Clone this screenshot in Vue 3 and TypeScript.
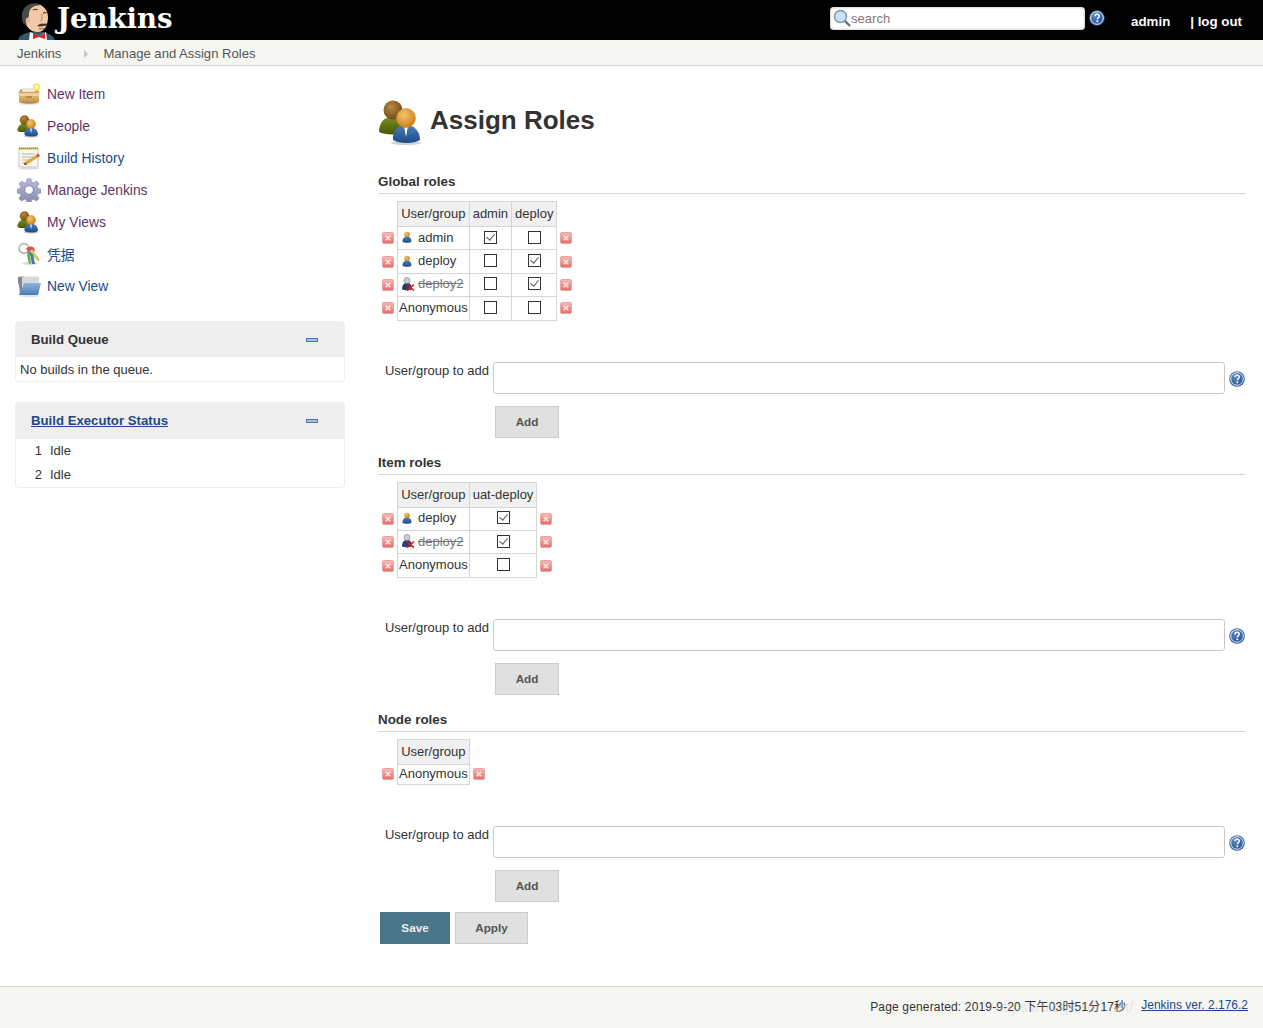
<script setup lang="ts">
interface RoleRow {
  name: string
  kind: 'user' | 'gone' | 'anon'
  checks: boolean[]
}

interface RoleSection {
  title: string
  roles: string[]
  rows: RoleRow[]
}

const tasks = [
  { label: 'New Item', icon: 'i-box', visited: true },
  { label: 'People', icon: 'i-people', visited: true },
  { label: 'Build History', icon: 'i-notes', visited: false },
  { label: 'Manage Jenkins', icon: 'i-gear', visited: true },
  { label: 'My Views', icon: 'i-people', visited: true },
  { label: '凭据', icon: 'i-keys', visited: false },
  { label: 'New View', icon: 'i-folder', visited: false },
]

const sections: RoleSection[] = [
  {
    title: 'Global roles',
    roles: ['admin', 'deploy'],
    rows: [
      { name: 'admin', kind: 'user', checks: [true, false] },
      { name: 'deploy', kind: 'user', checks: [false, true] },
      { name: 'deploy2', kind: 'gone', checks: [false, true] },
      { name: 'Anonymous', kind: 'anon', checks: [false, false] },
    ],
  },
  {
    title: 'Item roles',
    roles: ['uat-deploy'],
    rows: [
      { name: 'deploy', kind: 'user', checks: [true] },
      { name: 'deploy2', kind: 'gone', checks: [true] },
      { name: 'Anonymous', kind: 'anon', checks: [false] },
    ],
  },
  {
    title: 'Node roles',
    roles: [],
    rows: [{ name: 'Anonymous', kind: 'anon', checks: [] }],
  },
]
</script>

<template>
  <svg class="sprites" width="0" height="0" aria-hidden="true">
    <defs>
      <radialGradient id="g-orange" cx="40%" cy="35%" r="70%">
        <stop offset="0" stop-color="#f6c66e" />
        <stop offset="1" stop-color="#c97d16" />
      </radialGradient>
      <radialGradient id="g-brown" cx="40%" cy="35%" r="70%">
        <stop offset="0" stop-color="#b98a45" />
        <stop offset="1" stop-color="#6d4513" />
      </radialGradient>
      <linearGradient id="g-blue" x1="0" y1="0" x2="0" y2="1">
        <stop offset="0" stop-color="#4b80bd" />
        <stop offset="1" stop-color="#1d4a87" />
      </linearGradient>
      <linearGradient id="g-olive" x1="0" y1="0" x2="0" y2="1">
        <stop offset="0" stop-color="#7d8f22" />
        <stop offset="1" stop-color="#465608" />
      </linearGradient>
      <linearGradient id="g-box" x1="0" y1="0" x2="0" y2="1">
        <stop offset="0" stop-color="#ecc58a" />
        <stop offset="1" stop-color="#c08c45" />
      </linearGradient>
      <linearGradient id="g-folder" x1="0" y1="0" x2="0" y2="1">
        <stop offset="0" stop-color="#8fb4de" />
        <stop offset="1" stop-color="#4a7cb8" />
      </linearGradient>
      <linearGradient id="g-red" x1="0" y1="0" x2="0" y2="1">
        <stop offset="0" stop-color="#f5bcb9" />
        <stop offset="1" stop-color="#e46a67" />
      </linearGradient>
      <linearGradient id="g-gear" x1="0" y1="0" x2="0" y2="1">
        <stop offset="0" stop-color="#b9b9d8" />
        <stop offset="1" stop-color="#8a8ab2" />
      </linearGradient>
      <radialGradient id="g-help" cx="40%" cy="35%" r="70%">
        <stop offset="0" stop-color="#5b8ac6" />
        <stop offset="1" stop-color="#1f4a8a" />
      </radialGradient>

      <symbol id="i-people" viewBox="0 0 48 48">
        <ellipse cx="28" cy="45" rx="15" ry="2" fill="#000" opacity=".18" />
        <path d="M1 34c0-10 6-15 12-15 7 0 13 5 13 16-8 2-20 2-25-1z" fill="url(#g-olive)" />
        <circle cx="15" cy="12" r="9.500" fill="url(#g-brown)" />
        <path d="M15 42c-1-9 5-15 13-15s14 6 14 15c-6 4-21 4-27 0z" fill="url(#g-blue)" />
        <path d="M26 28h4l-2 11z" fill="#fff" />
        <circle cx="28" cy="20" r="9.500" fill="url(#g-orange)" stroke="#d08d2a" stroke-width=".6" />
      </symbol>

      <symbol id="i-box" viewBox="0 0 24 24">
        <path d="M1 11l3-4h16l3 4-3 2H4z" fill="#c9985a" />
        <path d="M5 6h13v4H5z" fill="#efe7d6" />
        <path d="M2 11h20v9c-5 2-15 2-20 0z" fill="url(#g-box)" />
        <path d="M1 10l5 1h12l5-1-2 4H3z" fill="#f0cf98" />
        <path d="M9 14h6v2H9z" fill="#8f5f20" opacity=".45" />
        <ellipse cx="12" cy="21.500" rx="10" ry="1.300" fill="#000" opacity=".14" />
        <circle cx="19.500" cy="5" r="3.700" fill="#f8e85a" />
        <circle cx="19.500" cy="5" r="1.800" fill="#fffbe0" />
      </symbol>

      <symbol id="i-notes" viewBox="0 0 24 24">
        <path d="M2 2h19v19H2z" fill="#f7f6ef" stroke="#bcbcb0" stroke-width=".8" />
        <path d="M2 1.500h19v2H2z" fill="#d2b868" />
        <path d="M2 2.500h19" stroke="#8a6c20" stroke-width=".8" stroke-dasharray="1 1" />
        <path d="M5 8h13M5 11h13M5 14h8M5 17h6" stroke="#b4b4ac" stroke-width="1" />
        <path d="M7 19l1-3 11-7 2 2.500-11 7z" fill="#e7a33d" />
        <path d="M19 9l2 2.500 2-1.500-2-2.500z" fill="#d8433a" />
        <path d="M7 19l1-3 2 2.500z" fill="#5a4a30" />
        <ellipse cx="12" cy="22.500" rx="10" ry="1.100" fill="#000" opacity=".14" />
      </symbol>

      <symbol id="i-gear" viewBox="0 0 24 24">
        <path d="M10 .8h4l.6 3.300 2 .8 2.800-1.900 2.700 2.800-1.900 2.800.8 2 3 .6v3.800l-3 .6-.8 2 1.900 2.800-2.700 2.700-2.800-1.900-2 .9-.6 3h-4l-.6-3-2-.9-2.800 1.900-2.700-2.700 1.900-2.800-.8-2-3-.6v-3.800l3-.6.800-2-1.900-2.800 2.700-2.800 2.800 1.900 2-.8z" fill="url(#g-gear)" stroke="#7d7da5" stroke-width=".5" />
        <circle cx="12" cy="12" r="4.300" fill="#fff" stroke="#77779c" stroke-width=".8" />
      </symbol>

      <symbol id="i-keys" viewBox="0 0 24 24">
        <ellipse cx="13" cy="21.500" rx="8" ry="1.500" fill="#000" opacity=".16" />
        <circle cx="7" cy="6.500" r="4.800" fill="none" stroke="#b4b4b4" stroke-width="1.700" />
        <path d="M9 7c2-3 6-3 8-1l1 3-5 2z" fill="#d9534a" />
        <path d="M15 7l8 11-2 1.500L12 10z" fill="#dcc667" />
        <path d="M10 9l4 1 1 3-4 2z" fill="#55a650" />
        <path d="M10 13l3-1 1 9-2 1z" fill="#5fae50" />
        <path d="M13 11l3 1 2 10h-3z" fill="#3f78b5" />
      </symbol>

      <symbol id="i-folder" viewBox="0 0 24 24">
        <path d="M1 3l6-1 1 2h14v6H1z" fill="#9aa0a8" />
        <path d="M5 2.500h17v9H5z" fill="#d8d8d8" />
        <path d="M1 3h4v16L3 20z" fill="#7f8690" />
        <path d="M7 9h17l-3 12H2z" fill="url(#g-folder)" />
        <ellipse cx="12" cy="22" rx="10" ry="1" fill="#000" opacity=".12" />
      </symbol>

      <symbol id="i-user" viewBox="0 0 12 12">
        <path d="M1.500 11c0-4 2-5.500 4.500-5.500s4.500 1.500 4.500 5.500c-2 1-7 1-9 0z" fill="url(#g-blue)" />
        <circle cx="6" cy="3.500" r="2.800" fill="url(#g-orange)" />
      </symbol>

      <symbol id="i-gone" viewBox="0 0 14 14">
        <path d="M1 12.500c0-5 2.300-6.500 5-6.500s5 1.500 5 6.500c-2 1-8 1-10 0z" fill="#27406f" />
        <circle cx="6" cy="3.500" r="3" fill="#d0cfd0" stroke="#77727a" stroke-width=".6" />
        <path d="M6 7.500l7 6M13 7.500l-7 6" stroke="#e0141c" stroke-width="1.600" />
      </symbol>

      <symbol id="i-del" viewBox="0 0 12 12">
        <rect x=".5" y=".5" width="11" height="11" rx="1.500" fill="url(#g-red)" stroke="#e8a5a2" />
        <path d="M3.700 3.700l4.600 4.600M8.300 3.700l-4.600 4.600" stroke="#fbe6e5" stroke-width="1.500" />
      </symbol>

      <symbol id="i-help" viewBox="0 0 16 16">
        <circle cx="8" cy="8" r="7.800" fill="url(#g-help)" />
        <circle cx="8" cy="8" r="6.300" fill="none" stroke="#fff" stroke-width=".9" />
        <path d="M5.900 6.300c0-1.300 1-2 2.200-2s2.100.8 2.100 1.900c0 1.500-1.800 1.600-1.800 3" fill="none" stroke="#fff" stroke-width="1.500" />
        <circle cx="8.300" cy="11.300" r="1" fill="#fff" />
      </symbol>
    </defs>
  </svg>

  <div class="page">
    <header class="topbar">
      <div class="logo">
        <svg class="butler" viewBox="0 0 38 40" width="38" height="40" aria-hidden="true">
          <path d="M0 40c1-5 8-7 12-8h12c6 1 11 3 13 8z" fill="#35576b" />
          <path d="M12 32l9 4 7-4 1 8H11z" fill="#f4f4f0" />
          <path d="M5 17C4 9 9 4 17 4c8 0 13 6 13 13 0 7-3 15-10 15-7 1-13-6-15-15z" fill="#f2c9a8" />
          <path d="M5 23C2 14 5 5 14 3.500c5-.5 8 .5 10 1.500-8 0-13 3-13 9 0 3-1 4-1 5-2-1-3 2-1 6z" fill="#4a4a48" />
          <circle cx="10" cy="20" r="2.300" fill="#e8b48f" />
          <path d="M15 10c1.500-1 3-1 4.500 0M25 13c1-.6 2-.6 3.500 0" stroke="#4b3b30" stroke-width="1.200" fill="none" />
          <path d="M24 14c0 4 1 6-2 7" stroke="#b07d5e" stroke-width="1" fill="none" />
          <path d="M19 26c3-3 6-3 7-2 1-1 3 0 4 1-3 1-8 2-11 1z" fill="#3f3630" />
          <path d="M21 28.500c3 .8 5 .5 7-1" stroke="#8a5443" stroke-width="1" fill="none" />
          <path d="M15 33l6 3 6-3v6l-6-2-6 2z" fill="#cf2a26" />
        </svg>
        <span class="logo-text">Jenkins</span>
      </div>
      <div class="top-right">
        <div class="search">
          <svg class="search-icon" viewBox="0 0 18 18" width="18" height="18" aria-hidden="true">
            <circle cx="7.500" cy="7.500" r="6" fill="#cfe0ef" stroke="#7f97ad" stroke-width="1.500" />
            <path d="M12 12l5 5" stroke="#5f6b75" stroke-width="2.200" />
          </svg>
          <input class="search-input" type="text" placeholder="search" />
        </div>
        <svg class="top-help" width="16" height="16" aria-hidden="true"><use href="#i-help" /></svg>
        <a class="top-link user-link">admin</a>
        <span class="top-link logout">| log out</span>
      </div>
    </header>

    <nav class="crumbs">
      <a class="crumb">Jenkins</a>
      <span class="crumb-arrow"></span>
      <a class="crumb">Manage and Assign Roles</a>
    </nav>

    <div class="body">
      <aside class="side">
        <ul class="tasks">
          <li v-for="task in tasks" :key="task.label" class="task">
            <svg class="task-icon" width="24" height="24" aria-hidden="true"><use :href="`#${task.icon}`" /></svg>
            <a class="task-link" :class="{ visited: task.visited }">{{ task.label }}</a>
          </li>
        </ul>

        <section class="pane queue">
          <div class="pane-head">
            <span class="pane-title">Build Queue</span>
            <span class="collapse"></span>
          </div>
          <div class="queue-empty">No builds in the queue.</div>
        </section>

        <section class="pane executors">
          <div class="pane-head">
            <a class="pane-title pane-link">Build Executor Status</a>
            <span class="collapse"></span>
          </div>
          <div v-for="n in 2" :key="n" class="executor">
            <span class="executor-num">{{ n }}</span>
            <span>Idle</span>
          </div>
        </section>
      </aside>

      <main class="main">
        <div class="title-row">
          <svg width="48" height="48" aria-hidden="true"><use href="#i-people" /></svg>
          <h1 class="title">Assign Roles</h1>
        </div>

        <section v-for="section in sections" :key="section.title" class="role-section">
          <h2 class="section-title">{{ section.title }}</h2>
          <table class="grid">
            <thead>
              <tr>
                <th class="spacer"></th>
                <th class="cell head">User/group</th>
                <th v-for="role in section.roles" :key="role" class="cell head">{{ role }}</th>
                <th class="spacer"></th>
              </tr>
            </thead>
            <tbody>
              <tr v-for="row in section.rows" :key="row.name">
                <td class="del"><svg width="12" height="12" aria-hidden="true"><use href="#i-del" /></svg></td>
                <td class="cell name">
                  <span v-if="row.kind === 'anon'">{{ row.name }}</span>
                  <span v-else class="who">
                    <svg v-if="row.kind === 'user'" class="who-icon" width="12" height="12" aria-hidden="true"><use href="#i-user" /></svg>
                    <svg v-else class="who-icon gone-icon" width="14" height="14" aria-hidden="true"><use href="#i-gone" /></svg>
                    <span :class="{ gone: row.kind === 'gone' }">{{ row.name }}</span>
                  </span>
                </td>
                <td v-for="(checked, i) in row.checks" :key="i" class="cell check">
                  <input class="box" type="checkbox" :checked="checked" />
                </td>
                <td class="del"><svg width="12" height="12" aria-hidden="true"><use href="#i-del" /></svg></td>
              </tr>
            </tbody>
          </table>

          <div class="add-row">
            <label class="add-label">User/group to add</label>
            <input class="add-input" type="text" />
            <svg class="add-help" width="16" height="16" aria-hidden="true"><use href="#i-help" /></svg>
          </div>
          <button class="btn add-btn" type="button">Add</button>
        </section>

        <div class="actions">
          <button class="btn save" type="button">Save</button>
          <button class="btn apply" type="button">Apply</button>
        </div>
      </main>
    </div>

    <footer class="footer">
      <span class="generated">Page generated: 2019-9-20 下午03时51分17秒</span>
      <a class="version">Jenkins ver. 2.176.2</a>
      <span class="watermark">https://blog.csdn.net/</span>
    </footer>
  </div>
</template>

<style>
html,
body {
  margin: 0;
  background: #fff;
}
</style>

<style scoped>
.sprites {
  position: absolute;
}

.page {
  font-family: "Liberation Sans", "Noto Sans CJK SC", sans-serif;
  font-size: 13px;
  color: #333;
}

.topbar {
  display: flex;
  justify-content: space-between;
  height: 40px;
  background: #000;
  overflow: hidden;
}

.logo {
  display: flex;
  align-items: flex-start;
  padding-left: 18px;
}

.logo-text {
  margin: 1px 0 0 1px;
  font-family: "DejaVu Serif", serif;
  font-size: 27.500px;
  font-weight: 700;
  line-height: 34px;
  color: #fff;
}

.top-right {
  display: flex;
  align-items: center;
  padding-right: 21px;
}

.search {
  position: relative;
  display: flex;
  width: 255px;
  height: 23px;
  margin-top: -4px;
}

.search-icon {
  position: absolute;
  left: 3px;
  top: 2px;
}

.search-input {
  box-sizing: border-box;
  width: 100%;
  height: 100%;
  padding: 0 4px 0 21px;
  border: 0;
  border-radius: 4px;
  background: #fff;
  box-shadow: inset 0 0 3px #aaa;
  font: 13px "Liberation Sans", sans-serif;
}

.search-input::placeholder {
  color: #7b7b7b;
}

.top-help {
  margin: -4px 0 0 4px;
}

.top-link {
  font-size: 13.300px;
  font-weight: 700;
  color: #fff;
}

.user-link {
  margin-left: 26px;
  margin-top: 2px;
}

.logout {
  margin-left: 20px;
  margin-top: 2px;
}

.crumbs {
  display: flex;
  align-items: center;
  box-sizing: border-box;
  height: 26px;
  padding: 2px 0 0 17px;
  background: #f6f7f2;
  border-bottom: 1px solid #d3d7cf;
}

.crumb {
  font-size: 13.100px;
  color: #555;
}

.crumb-arrow {
  width: 0;
  height: 0;
  margin: 0 15px 0 23px;
  border-left: 4px solid #c3c6bf;
  border-top: 4px solid transparent;
  border-bottom: 4px solid transparent;
}

.body {
  display: flex;
}

.side {
  box-sizing: border-box;
  width: 360px;
  flex: none;
  padding: 12px 15px 0;
}

.tasks {
  margin: 0 0 19px;
  padding: 0;
  list-style: none;
}

.task {
  display: flex;
  align-items: center;
  height: 32px;
  padding-left: 2px;
}

.task-icon {
  flex: none;
  margin-right: 6px;
}

.task-link {
  font-size: 13.800px;
  color: #204a87;
}

.task-link.visited {
  color: #5c3566;
}

.pane {
  border: 1px solid #eee;
  border-radius: 4px;
}

.executors {
  margin-top: 20px;
}

.pane-head {
  display: flex;
  align-items: center;
  justify-content: space-between;
  box-sizing: border-box;
  height: 35px;
  padding: 0 26px 0 15px;
  background: #eee;
}

.executors .pane-head {
  height: 36px;
  padding-bottom: 1px;
}

.pane-title {
  font-size: 13.200px;
  font-weight: 700;
  color: #333;
}

.pane-link {
  color: #204a87;
  text-decoration: underline;
}

.collapse {
  box-sizing: border-box;
  width: 12px;
  height: 4px;
  border: 1px solid #4f77ad;
  background: #a9c1e2;
}

.queue-empty {
  padding: 4px 4px 3px;
  height: 17px;
  line-height: 17px;
}

.executor {
  display: flex;
  align-items: center;
  box-sizing: border-box;
  height: 24px;
  padding-bottom: 2px;
  font-size: 13px;
}

.executor-num {
  width: 26px;
  margin-right: 8px;
  text-align: right;
}

.main {
  flex: 1;
  box-sizing: border-box;
  min-width: 0;
  padding: 0 18px 0 18px;
}

.title-row {
  display: flex;
  align-items: center;
  height: 48px;
  margin-top: 32px;
  margin-bottom: 26px;
}

.title {
  margin: 0 0 4px 4px;
  font-size: 26px;
  font-weight: 700;
  color: #333;
}

.role-section {
  margin-bottom: 15px;
}

.role-section:last-of-type {
  margin-bottom: 10px;
}

.section-title {
  margin: 0 0 7px;
  height: 21px;
  font-size: 13.400px;
  font-weight: 700;
  line-height: 19px;
  color: #333;
  border-bottom: 1px solid #d3d7cf;
}

.grid {
  border-collapse: collapse;
}

.spacer {
  width: 19px;
  padding: 0;
}

.cell {
  border: 1px solid #d3d7cf;
  padding: 0 1px;
}

.head {
  height: 23px;
  padding: 0 3px 1px;
  background: #f0f0f0;
  font-weight: 400;
  color: #333;
}

.name {
  height: 17px;
  padding-bottom: 2px;
  font-size: 13px;
  white-space: nowrap;
}

.who {
  display: flex;
  align-items: center;
}

.who-icon {
  flex: none;
  margin: 0 5px 0 2px;
}

.gone-icon {
  margin: 0 3px 0 2px;
}

.gone {
  color: #777;
  text-decoration: line-through;
}

.check {
  height: 20.400px;
  padding-bottom: 2px;
  text-align: center;
}

.box {
  position: relative;
  display: block;
  appearance: none;
  box-sizing: border-box;
  width: 13px;
  height: 13px;
  margin: 0 auto;
  border: 1px solid #333;
  background: #fff;
}

.box:checked::after {
  content: '';
  position: absolute;
  left: 3px;
  top: 0;
  width: 4px;
  height: 7px;
  border-right: 1.500px solid #555;
  border-bottom: 1.500px solid #555;
  transform: rotate(40deg);
}

.del {
  padding: 0 3px 0 4px;
  line-height: 0;
}

.del:last-child {
  padding-left: 3px;
}

.add-row {
  display: flex;
  align-items: flex-start;
  margin-top: 41px;
}

.add-label {
  box-sizing: border-box;
  width: 115px;
  padding: 1px 4px 0 0;
  font-size: 13px;
  line-height: 16px;
  text-align: right;
  white-space: nowrap;
  color: #333;
}

.add-input {
  box-sizing: border-box;
  flex: 1;
  min-width: 0;
  height: 32px;
  border: 1px solid #c8c8c8;
  border-radius: 3px;
  background: #fff;
}

.add-help {
  flex: none;
  margin: 9px 0 0 4px;
}

.btn {
  box-sizing: border-box;
  height: 32px;
  padding: 0 20px 1px;
  border: 1px solid #ccc;
  background: #e0e0e0;
  font: 700 11.700px "Liberation Sans", sans-serif;
  color: #555;
}

.add-btn {
  display: block;
  width: 64px;
  padding: 0 0 1px;
  margin: 12px 0 0 117px;
}

.actions {
  display: flex;
  gap: 5px;
  padding-left: 2px;
  margin-bottom: 42px;
}

.save {
  width: 70px;
  padding: 0 0 1px;
  border-color: #4b758b;
  background: #4b758b;
  color: #eee;
}

.apply {
  width: 73px;
  padding: 0 0 1px;
}

.footer {
  position: relative;
  display: flex;
  justify-content: flex-end;
  align-items: center;
  gap: 15px;
  box-sizing: border-box;
  height: 42px;
  padding: 0 15px 4px 0;
  background: #f6f7f2;
  border-top: 1px solid #d3d7cf;
  font-size: 12px;
}

.generated {
  letter-spacing: .16px;
}

.version {
  color: #204a87;
  text-decoration: underline;
}

.watermark {
  position: absolute;
  left: 995px;
  top: 11px;
  font-size: 15px;
  color: rgba(190, 190, 190, .35);
  white-space: nowrap;
  pointer-events: none;
}
</style>
